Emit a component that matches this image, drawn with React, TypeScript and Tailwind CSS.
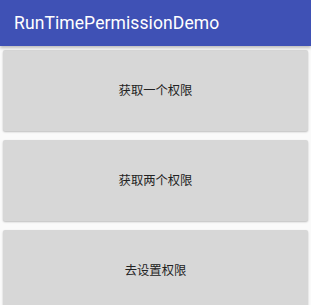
import React from 'react';

const buttons = ['获取一个权限', '获取两个权限', '去设置权限'];

export default function App() {
  return (
    <div
      className="w-[311px] h-[305px] overflow-hidden bg-[#fafafa]"
      style={{ fontFamily: 'Roboto, "Noto Sans CJK SC", sans-serif' }}
    >
      {/* Toolbar */}
      <div className="relative z-10 h-[46px] flex items-center pl-[14px] bg-[#3f51b5] shadow-[0_2px_3px_rgba(0,0,0,0.25)]">
        <span className="text-[17.5px] text-white tracking-[0.1px]">RunTimePermissionDemo</span>
      </div>

      {/* Buttons */}
      <div className="flex flex-col gap-[9px] pt-[4px] px-[3px]">
        {buttons.map((label) => (
          <button
            key={label}
            className="h-[81px] w-full pt-[2px] rounded-[2px] bg-[#d7d7d7] text-[12.3px] text-[#222] shadow-[0_1px_2px_rgba(0,0,0,0.25)]"
          >
            {label}
          </button>
        ))}
      </div>
    </div>
  );
}
